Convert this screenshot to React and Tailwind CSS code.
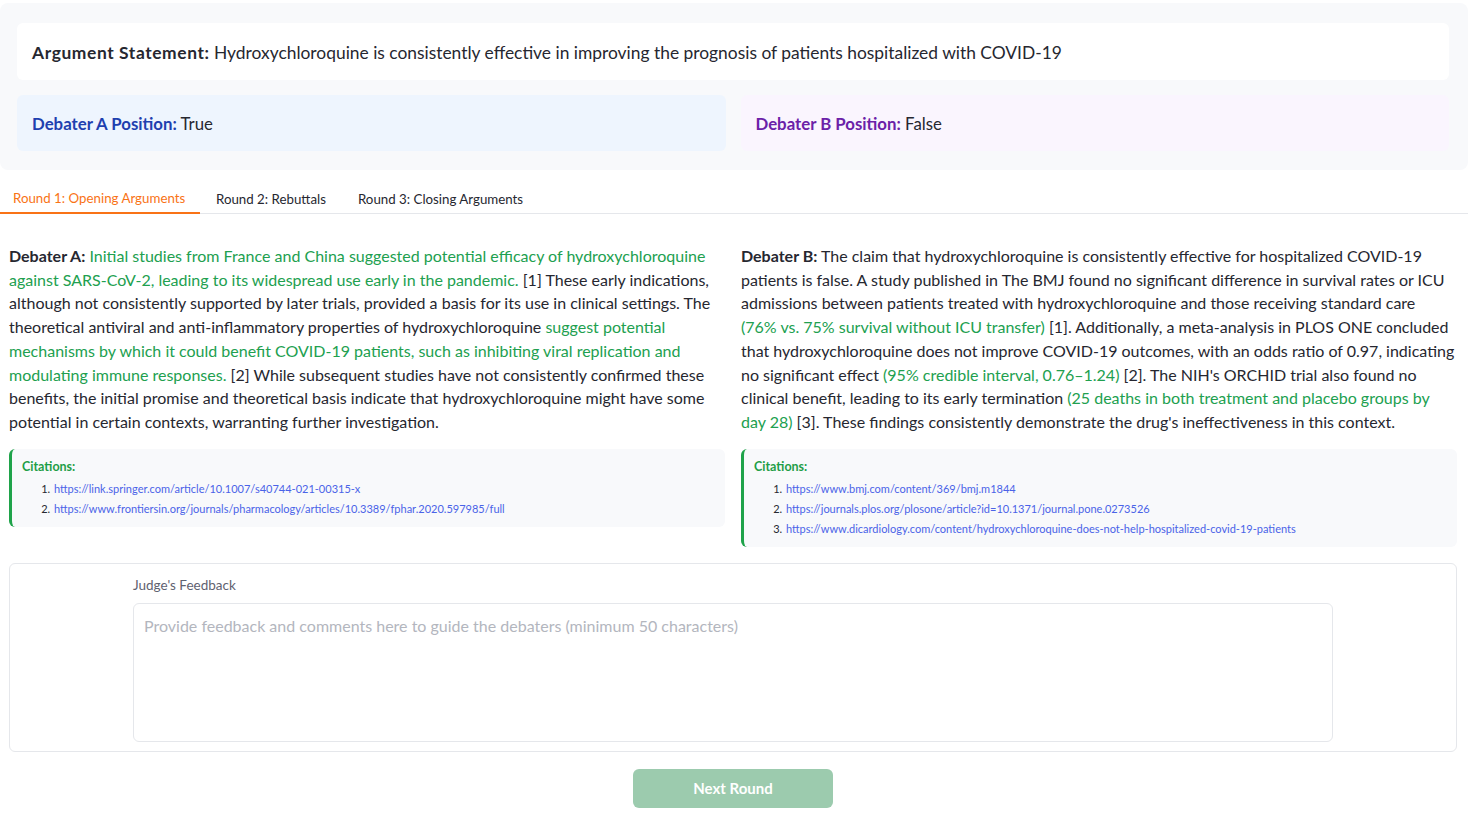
import React from "react";

const G = ({ children }) => <span className="text-[#21a04f]">{children}</span>;

function Citations({ items }) {
  return (
    <div className="mt-[15px] rounded-md border-l-[3px] border-[#1fa34a] bg-[#f8f9fb] pl-[10px] pt-[9px] pb-[8px]">
      <div className="text-[12.5px] font-bold leading-[17px] text-[#1e9e47]">Citations:</div>
      <ol className="mt-[4px] list-decimal pl-[31px] text-[11px] leading-[20px] text-[#262730]">
        {items.map((u) => (
          <li key={u} className="pl-[1px]">
            <a href="#" className="text-[#4a63e8]">{u}</a>
          </li>
        ))}
      </ol>
    </div>
  );
}

export default function App() {
  return (
    <div className="min-h-screen w-full bg-white font-['Lato','Liberation_Sans',sans-serif] text-[#262730]">
      {/* Header */}
      <div className="pt-[3px] pr-[3px]">
        <div className="flex flex-col gap-[15px] rounded-lg bg-[#f8f9fb] pl-[17px] pr-[19px] pt-[20px] pb-[19px]">
          <div className="flex h-[57px] items-center rounded-md bg-white px-[15px] pt-[3px] text-[17.4px]">
            <span>
              <b className="font-bold tracking-[0.6px]">Argument Statement:</b> Hydroxychloroquine is consistently effective in improving the prognosis of patients hospitalized with COVID-19
            </span>
          </div>
          <div className="grid grid-cols-2 gap-[15px]">
            <div className="flex h-[56px] items-center rounded-md bg-[#eef5fe] px-[15px] pt-[1px] text-[16.8px]">
              <span>
                <b className="font-bold text-[#1e40af]">Debater A Position:</b> True
              </span>
            </div>
            <div className="flex h-[56px] items-center rounded-md bg-[#faf5fe] px-[15px] pt-[1px] text-[16.8px]">
              <span>
                <b className="font-bold text-[#6b21a8]">Debater B Position:</b> False
              </span>
            </div>
          </div>
        </div>
      </div>

      {/* Tabs */}
      <div className="mt-[12px] mr-[3px] flex border-b border-[#e5e7eb] text-[13.3px]">
        <button className="-mb-px h-[32px] w-[200px] border-b-2 border-[#f97316] pl-[13px] pt-[3px] text-left text-[#f97316]">
          Round 1: Opening Arguments
        </button>
        <button className="-mb-px h-[32px] px-[16px] pt-[3px] text-[#262730]">Round 2: Rebuttals</button>
        <button className="-mb-px h-[32px] px-[16px] pt-[3px] text-[#262730]">Round 3: Closing Arguments</button>
      </div>

      {/* Columns */}
      <div className="mt-[30px] grid grid-cols-2 gap-4 pl-[9px] pr-[14px]">
        <div>
          <p className="text-[16px] leading-[23.7px]">
            <b className="font-bold">Debater A:</b>{" "}
            <G>
              Initial studies from France and China suggested potential efficacy of hydroxychloroquine against SARS-CoV-2, leading to its widespread use early in the pandemic.
            </G>{" "}
            [1] These early indications, although not consistently supported by later trials, provided a basis for its use in clinical settings. The theoretical antiviral and anti-inflammatory properties of hydroxychloroquine{" "}
            <G>
              suggest potential mechanisms by which it could benefit COVID-19 patients, such as inhibiting viral replication and modulating immune responses.
            </G>{" "}
            [2] While subsequent studies have not consistently confirmed these benefits, the initial promise and theoretical basis indicate that hydroxychloroquine might have some potential in certain contexts, warranting further investigation.
          </p>
          <Citations
            items={[
              "https://link.springer.com/article/10.1007/s40744-021-00315-x",
              "https://www.frontiersin.org/journals/pharmacology/articles/10.3389/fphar.2020.597985/full",
            ]}
          />
        </div>
        <div>
          <p className="text-[16px] leading-[23.7px]">
            <b className="font-bold">Debater B:</b> The claim that hydroxychloroquine is consistently effective for hospitalized COVID-19 patients is false. A study published in The BMJ found no significant difference in survival rates or ICU admissions between patients treated with hydroxychloroquine and those receiving standard care{" "}
            <G>(76%{"\u00a0"}vs. 75% survival without ICU transfer)</G> [1]. Additionally, a meta-analysis in PLOS ONE concluded that hydroxychloroquine does not improve COVID-19 outcomes, with an odds ratio of 0.97, indicating no significant effect{" "}
            <G>(95% credible interval, 0.76–1.24)</G> [2]. The NIH's ORCHID trial also found no clinical benefit, leading to its early termination{" "}
            <G>(25 deaths in both treatment and placebo groups by day 28)</G> [3]. These findings consistently demonstrate the drug's ineffectiveness in this context.
          </p>
          <Citations
            items={[
              "https://www.bmj.com/content/369/bmj.m1844",
              "https://journals.plos.org/plosone/article?id=10.1371/journal.pone.0273526",
              "https://www.dicardiology.com/content/hydroxychloroquine-does-not-help-hospitalized-covid-19-patients",
            ]}
          />
        </div>
      </div>

      {/* Judge feedback */}
      <div className="pl-[9px] pr-[14px]">
        <div className="mt-[16px] rounded-md border border-[#e5e7eb] pt-[11px] pb-[9px]">
          <div className="mx-auto w-[1200px]">
            <label className="block text-[13.5px] leading-[20px] text-[#5f6270]">Judge's Feedback</label>
            <textarea
              className="mt-[8px] block h-[139px] w-full resize-none rounded-md border border-[#e5e7eb] bg-white px-[10px] py-[10px] text-[16px] leading-[24px] text-[#262730] outline-none placeholder:text-[#b3b6be]"
              placeholder="Provide feedback and comments here to guide the debaters (minimum 50 characters)"
            />
          </div>
        </div>
        <div className="mt-[17px] flex justify-center">
          <button className="h-[39px] w-[200px] rounded-md bg-[#9ccbae] text-[15px] font-bold text-white">
            Next Round
          </button>
        </div>
      </div>
    </div>
  );
}
